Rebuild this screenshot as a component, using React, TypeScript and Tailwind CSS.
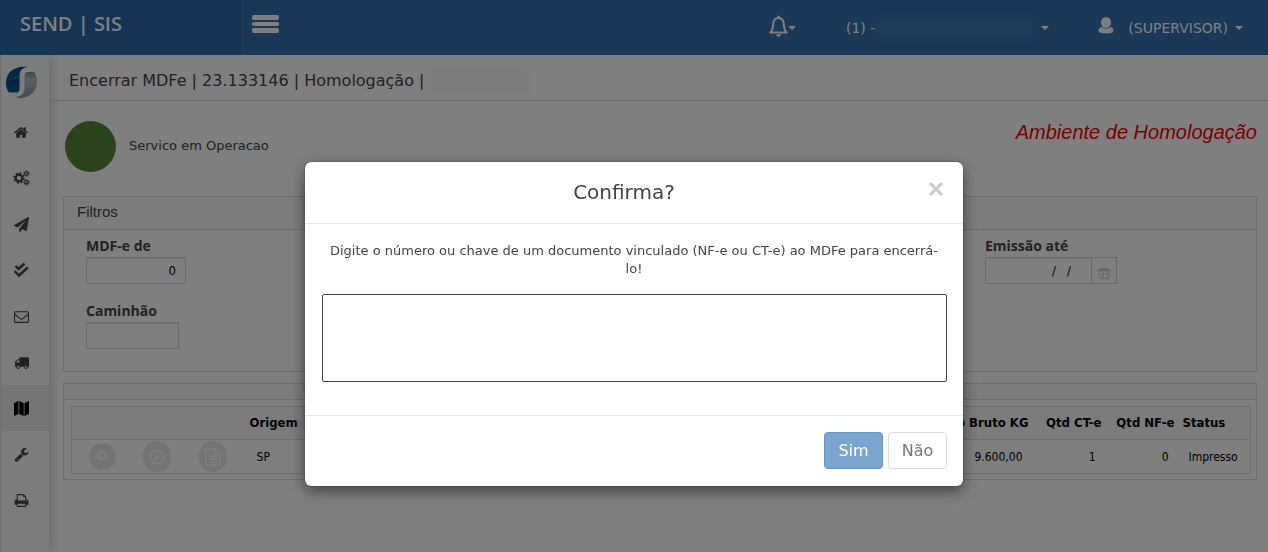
import { useState } from "react";
import type { ReactNode } from "react";
import { FaSearch } from "react-icons/fa";

interface MenuItem {
  nome: string;
  icone: ReactNode;
}

function Icone({ d, className = "size-[15px]" }: { d: string; className?: string }) {
  return (
    <svg viewBox="0 0 1792 1792" fill="currentColor" className={className} aria-hidden="true">
      <path d={d} />
    </svg>
  );
}

const HOME =
  "M1408 992v480q0 26-19 45t-45 19h-384v-384h-256v384h-384q-26 0-45-19t-19-45v-480q0-1 .5-3t.5-3l575-474 575 474q1 2 1 6zm223-69l-62 74q-8 9-21 11h-3q-13 0-21-7l-692-577-692 577q-12 8-24 7-13-2-21-11l-62-74q-8-10-7-23.5t11-21.5l719-599q32-26 76-26t76 26l244 204v-195q0-14 9-23t23-9h192q14 0 23 9t9 23v408l219 182q10 8 11 21.5t-7 23.5z";
const AVIAO =
  "M1764 11q33 24 27 64l-256 1536q-5 29-32 45-14 8-31 8-11 0-24-5l-453-185-242 295q-18 23-49 23-13 0-22-4-19-7-30.5-23.5t-11.5-36.5v-349l864-1059-1069 925-395-162q-37-14-40-55-2-40 32-59l1664-960q15-9 32-9 20 0 36 11z";
const ENVELOPE =
  "M1664 1504v-768q-32 36-69 66-268 206-426 338-51 43-83 67t-86.5 48.5-102.5 24.5h-2q-48 0-102.5-24.5t-86.5-48.5-83-67q-158-132-426-338-37-30-69-66v768q0 13 9.5 22.5t22.5 9.5h1472q13 0 22.5-9.5t9.5-22.5zm0-1051v-24.5l-.5-13-3-12.5-5.5-9-9-7.5-14-2.5h-1472q-13 0-22.5 9.5t-9.5 22.5q0 168 147 284 193 152 401 317 6 5 35 29.5t46 37.5 44.5 31.5 50.5 27.5 43 9h2q20 0 43-9t50.5-27.5 44.5-31.5 46-37.5 35-29.5q208-165 401-317 54-43 100.5-115.5t46.5-131.5zm128-37v1088q0 66-47 113t-113 47h-1472q-66 0-113-47t-47-113v-1088q0-66 47-113t113-47h1472q66 0 113 47t47 113z";
const CAMINHAO =
  "M640 1408q0-52-38-90t-90-38-90 38-38 90 38 90 90 38 90-38 38-90zm-384-512h384v-256h-158q-13 0-22 9l-195 195q-9 9-9 22v30zm1280 512q0-52-38-90t-90-38-90 38-38 90 38 90 90 38 90-38 38-90zm256-1088v1024q0 15-4 26.5t-13.5 18.5-16.5 11.5-23.5 6-22.5 2-25.5 0-22.5-.5q0 106-75 181t-181 75-181-75-75-181h-384q0 106-75 181t-181 75-181-75-75-181h-64q-3 0-22.5.5t-25.5 0-22.5-2-23.5-6-16.5-11.5-13.5-18.5-4-26.5q0-26 19-45t45-19v-320q0-8-.5-35t0-38 2.5-34.5 6.5-37 14-30.5 22.5-30l198-198q19-19 50.5-32t58.5-13h160v-192q0-26 19-45t45-19h1024q26 0 45 19t19 45z";
const MAPA = "M0 240L540 0V1540L0 1792zM630 0L1160 240V1792L630 1540zM1250 240L1792 0V1540L1250 1792z";
const CHAVE =
  "M448 1472q0-26-19-45t-45-19-45 19-19 45 19 45 45 19 45-19 19-45zm644-420l-682 682q-37 37-90 37-52 0-91-37l-106-108q-38-36-38-90 0-53 38-91l681-681q39 98 114.5 173.5t173.5 114.5zm634-435q0 39-23 106-47 134-164.5 217.5t-258.5 83.5q-185 0-316.5-131.5t-131.5-316.5 131.5-316.5 316.5-131.5q58 0 121.5 16.5t107.5 46.5q16 11 16 28t-16 28l-293 169v224l193 107q5-3 79-48.5t135.5-81 70.5-35.5q15 0 23.5 10t8.5 25z";
const IMPRESSORA =
  "M448 1536h896v-256h-896v256zm0-640h896v-384h-160q-40 0-68-28t-28-68v-160h-640v640zm1152 64q0-26-19-45t-45-19-45 19-19 45 19 45 45 19 45-19 19-45zm128 0v416q0 13-9.5 22.5t-22.5 9.5h-224v160q0 40-28 68t-68 28h-960q-40 0-68-28t-28-68v-160h-224q-13 0-22.5-9.5t-9.5-22.5v-416q0-79 56.5-135.5t135.5-56.5h64v-544q0-40 28-68t68-28h672q40 0 88 20t76 48l152 152q28 28 48 76t20 88v256h64q79 0 135.5 56.5t56.5 135.5z";

function Engrenagens() {
  return (
    <svg viewBox="0 0 17 16" fill="none" stroke="currentColor" className="h-4 w-[17px] shrink-0" aria-hidden="true">
      <circle cx="6" cy="8" r="3.3" strokeWidth="2.2" />
      <circle cx="6" cy="8" r="5" strokeWidth="1.6" strokeDasharray="1.96 1.96" />
      <circle cx="13.500" cy="3.500" r="1.700" strokeWidth="1.300" />
      <circle cx="13.500" cy="3.500" r="2.700" strokeWidth="1" strokeDasharray="1.400 1.430" />
      <circle cx="13.500" cy="12.300" r="1.700" strokeWidth="1.300" />
      <circle cx="13.500" cy="12.300" r="2.700" strokeWidth="1" strokeDasharray="1.400 1.430" />
    </svg>
  );
}

function Conferido() {
  return (
    <svg viewBox="0 0 16 16" fill="none" stroke="currentColor" strokeWidth="2.400" className="size-4" aria-hidden="true">
      <path d="M2.500 4L5.500 7L11.500 1.500" />
      <path d="M1.500 9L6 13.500L14.800 5.500" />
    </svg>
  );
}

const MENU: MenuItem[] = [
  { nome: "Home", icone: <Icone d={HOME} /> },
  { nome: "Configurações", icone: <Engrenagens /> },
  { nome: "Envios", icone: <Icone d={AVIAO} /> },
  { nome: "Conferência", icone: <Conferido /> },
  { nome: "Mensagens", icone: <Icone d={ENVELOPE} /> },
  { nome: "Transporte", icone: <Icone d={CAMINHAO} /> },
  { nome: "MDFe", icone: <Icone d={MAPA} /> },
  { nome: "Ferramentas", icone: <Icone d={CHAVE} /> },
  { nome: "Impressão", icone: <Icone d={IMPRESSORA} /> },
];

const ATIVO = "MDFe";

function Seta() {
  return (
    <svg viewBox="0 0 8 4" fill="currentColor" className="h-1 w-2" aria-hidden="true">
      <path d="M0 0H8L4 4Z" />
    </svg>
  );
}

function Logo() {
  return (
    <svg viewBox="0 0 31 32" className="h-8 w-[31px]" aria-hidden="true">
      <defs>
        <linearGradient id="azul" x1="0" y1="0" x2="0" y2="1">
          <stop offset="0" stopColor="#00457f" />
          <stop offset="0.4" stopColor="#0d548f" />
          <stop offset="0.5" stopColor="#003d78" />
          <stop offset="1" stopColor="#005a96" />
        </linearGradient>
        <linearGradient id="cinza" x1="0" y1="0" x2="0" y2="1">
          <stop offset="0" stopColor="#7f8c94" />
          <stop offset="0.3" stopColor="#b3c0c6" />
          <stop offset="1" stopColor="#8a989f" />
        </linearGradient>
      </defs>
      <path d="M21 1C10-1 0 6 0 16c0 5 1 8 3 10.500h7c3 0 3.500-2 3.500-5V10c0-5 2-8 7.500-9z" fill="url(#azul)" />
      <path d="M.5 14c4-2 8-3 13-3.500v2c-4 0-9 1-13.500 4z" fill="#7fa3c4" opacity="0.3" />
      <path d="M22 6h6c2 3 3 6 3 10 0 10-8 16-17 16-2 0-3-.5-4-1 6-1 8.500-4 8.500-9V10c0-2 1-4 3.500-4z" fill="url(#cinza)" />
      <path d="M12 29c4-1.500 5-4 5-8V10c0-4 2-6 5-7 3 0 5 1 6 3" fill="none" stroke="white" strokeWidth="2" />
    </svg>
  );
}

function Topo() {
  return (
    <header className="relative z-10 flex h-[55px] bg-[#3472b2] font-['DejaVu_Sans',Verdana,sans-serif] text-sm text-white">
      <div className="w-[241px] shrink-0 bg-[#2a68a6] px-5 pt-2 font-['Open_Sans',sans-serif] text-xl leading-8 font-semibold">
        SEND | SIS
      </div>
      <button type="button" aria-label="Menu" className="ml-[11px] flex h-12 w-[27px] flex-col justify-center gap-[2px]">
        <span className="h-[5px] w-full rounded-xs bg-white" />
        <span className="h-1 w-full rounded-xs bg-white" />
        <span className="h-[5px] w-full rounded-xs bg-white" />
      </button>
      <div className="ml-auto flex items-center pr-[25px]">
        <button type="button" aria-label="Notificações" className="mr-[50px] flex items-center">
          <svg viewBox="0 0 19 22" className="mb-1 h-[22px] w-[19px]" aria-hidden="true">
            <path d="M1.300 17.500C4 15 4 12 4.200 9C4.500 5 6.500 3 9.500 3s5 2 5.300 6c.2 3 .2 6 2.900 8.500z" fill="none" stroke="white" strokeWidth="2" strokeLinejoin="round" />
            <path d="M8 3a1.500 2.500 0 0 1 3 0zM7 19.300h5q-.5 2.500-2.500 2.500T7 19.300z" fill="white" />
          </svg>
          <Seta />
        </button>
        <button type="button" className="mr-[49px] flex items-center">
          (1) -
          <span className="mr-1 h-6 w-[162px] rounded-sm bg-[#3d78b3] blur-[2px]" />
          <Seta />
        </button>
        <button type="button" className="flex items-center">
          <svg viewBox="0 0 16 17" fill="white" className="mr-[14px] mb-1 h-[17px] w-4" aria-hidden="true">
            <ellipse cx="8" cy="5.500" rx="5" ry="5.500" />
            <path d="M3.500 10q4.500 3.500 9 0q3 1 3 3.500q0 3-7.500 3t-7.500-3q0-2.500 3-3.500z" />
          </svg>
          <span className="mr-[7px]">(SUPERVISOR)</span>
          <Seta />
        </button>
      </div>
    </header>
  );
}

function Lateral() {
  return (
    <nav className="w-[49px] shrink-0 border-l border-[#dcdfe4] bg-[#f5f8fd] text-[#444] shadow-[3px_0_10px_rgba(0,0,0,0.18)]">
      <div className="flex h-[54px] items-center pl-[5px]">
        <Logo />
      </div>
      {MENU.map((item) => (
        <a
          key={item.nome}
          href="#"
          aria-label={item.nome}
          className={
            item.nome === ATIVO
              ? "flex h-[46px] items-center bg-[#e9ebee] pl-3 text-black"
              : "flex h-[46px] items-center pl-3"
          }
        >
          <span className="flex w-4 justify-center">{item.icone}</span>
        </a>
      ))}
    </nav>
  );
}

const LABEL = "block font-['Open_Sans',sans-serif] text-sm leading-[22px] font-bold text-[#444]";
const CAMPO =
  "h-[27px] border border-[#d5d5d5] bg-white px-[9px] text-right font-['DejaVu_Sans_Condensed',sans-serif] text-[13px] text-black shadow-[inset_0_1px_1px_rgba(0,0,0,0.08)]";

function Filtros() {
  const [mdfe, setMdfe] = useState("0");
  const [caminhao, setCaminhao] = useState("");
  const [emissao, setEmissao] = useState("/   /");

  return (
    <section className="border border-[#dcdcdc]">
      <h2 className="border-b border-[#dcdcdc] bg-[#f8f8f8] px-[13px] pb-[2px] font-['Liberation_Sans',Arial,sans-serif] text-[15px] leading-[30px] text-[#444]">
        Filtros
      </h2>
      <div className="flex h-[141px] pt-[5px] pl-[22px]">
        <div className="flex flex-1 flex-col items-start gap-4">
          <div>
            <label htmlFor="mdfe" className={LABEL}>MDF-e de</label>
            <input id="mdfe" className={`${CAMPO} w-[100px]`} value={mdfe} onChange={(e) => setMdfe(e.target.value)} />
          </div>
          <div>
            <label htmlFor="caminhao" className={LABEL}>Caminhão</label>
            <input id="caminhao" className={`${CAMPO} w-[93px]`} value={caminhao} onChange={(e) => setCaminhao(e.target.value)} />
          </div>
        </div>
        <div className="w-[271px]">
          <label htmlFor="emissao" className={LABEL}>Emissão até</label>
          <div className="flex">
            <input
              id="emissao"
              className={`${CAMPO} w-[107px] pr-5 whitespace-pre`}
              value={emissao}
              onChange={(e) => setEmissao(e.target.value)}
            />
            <button type="button" aria-label="Calendário" className="-ml-px flex h-[27px] w-[26px] items-center justify-center border border-[#d0d0d0] pt-1">
              <svg viewBox="0 0 12 12" className="size-3 text-[#ccc]" fill="none" stroke="currentColor" aria-hidden="true">
                <rect x="1" y="1.500" width="10" height="10" rx="1" />
                <path d="M1 3h10" strokeWidth="2.500" />
                <path d="M3 0v2M9 0v2" stroke="white" />
                <path d="M3 6h2.500v4H3M3.500 8h2M7 6.500h1.500V10" />
              </svg>
            </button>
          </div>
        </div>
      </div>
    </section>
  );
}

const ACAO = "inline-flex items-center justify-center rounded-full bg-[#e6e6e6] text-[#fbfbfb] align-middle";

function Tabela() {
  return (
    <section className="mt-[11px] border border-[#dcdcdc]">
      <div className="h-4 border-b border-[#dcdcdc] bg-[#f8f8f8]" />
      <div className="pt-[6px] pr-[5px] pb-[5px] pl-[7px]">
        <table className="w-full table-fixed border border-[#dcdcdc] font-['DejaVu_Sans_Condensed',Tahoma,sans-serif] text-xs text-black">
          <colgroup>
            <col className="w-[62px]" />
            <col className="w-[46px]" />
            <col className="w-[66px]" />
            <col className="w-[75px]" />
            <col />
            <col className="w-[110px]" />
            <col className="w-[73px]" />
            <col className="w-[73px]" />
            <col className="w-[72px]" />
          </colgroup>
          <thead>
            <tr className="h-[33px] border-b border-[#dcdcdc] bg-[#f8f8f8] text-[13px] whitespace-nowrap">
              <th colSpan={3} />
              <th className="pl-1 text-left">Origem</th>
              <th />
              <th className="pr-1 text-right">Peso Bruto KG</th>
              <th className="pr-1 text-right">Qtd CT-e</th>
              <th className="pr-1 text-right">Qtd NF-e</th>
              <th className="pl-1 text-left">Status</th>
            </tr>
          </thead>
          <tbody>
            <tr className="h-[34px]">
              <td className="text-center">
                <button type="button" aria-label="Consultar" className={`${ACAO} size-[27px]`}><FaSearch className="size-[11px]" /></button>
              </td>
              <td className="text-center">
                <button type="button" aria-label="Histórico" className={`${ACAO} h-[31px] w-7`}>
                  <svg viewBox="0 0 16 16" fill="none" stroke="currentColor" strokeWidth="2" className="size-4" aria-hidden="true">
                    <circle cx="8" cy="8" r="6.500" />
                    <path d="M8.500 4v5H5" />
                  </svg>
                </button>
              </td>
              <td className="text-center">
                <button type="button" aria-label="Documento" className={`${ACAO} h-[31px] w-7`}>
                  <svg viewBox="0 0 16 18" fill="none" stroke="currentColor" strokeWidth="1.500" className="h-[18px] w-4" aria-hidden="true">
                    <path d="M1 1h9l5 5v11H1zM10 1v5h5M4 8h8M4 11h8M4 14h8" />
                  </svg>
                </button>
              </td>
              <td className="pl-[11px]">SP</td>
              <td />
              <td className="pr-[10px] text-right">9.600,00</td>
              <td className="pr-[10px] text-right">1</td>
              <td className="pr-[10px] text-right">0</td>
              <td className="pl-[10px]">Impresso</td>
            </tr>
          </tbody>
        </table>
      </div>
    </section>
  );
}

function Confirma({ onClose }: { onClose: () => void }) {
  const [documento, setDocumento] = useState("");

  return (
    <div className="fixed inset-0 z-20 flex items-start justify-center bg-black/50 pt-[162px]">
      <div
        role="dialog"
        aria-modal="true"
        aria-labelledby="titulo"
        className="w-full max-w-[658px] rounded-md bg-white font-['DejaVu_Sans',Verdana,sans-serif] text-[#444] shadow-[0_5px_15px_rgba(0,0,0,0.5),0_0_1px_#000]"
      >
        <div className="flex items-start border-b border-[#e5e5e5] px-[17px] py-4">
          <h4 id="titulo" className="flex-1 text-center text-xl leading-[29px]">Confirma?</h4>
          <button type="button" aria-label="Fechar" onClick={onClose} className="flex h-[22px] w-5 items-center justify-center text-[#ccc]">
            <svg viewBox="0 0 14 14" className="size-[14px]" stroke="currentColor" strokeWidth="3" aria-hidden="true">
              <path d="M1 1L13 13M13 1L1 13" />
            </svg>
          </button>
        </div>
        <div className="px-4 pt-[18px] pb-[33px] text-center">
          <label htmlFor="documento" className="block text-[13px] leading-[18px]">
            Digite o número ou chave de um documento vinculado (NF-e ou CT-e) ao MDFe para encerrá-
            <br />
            lo!
          </label>
          <textarea
            id="documento"
            value={documento}
            onChange={(e) => setDocumento(e.target.value)}
            className="mt-4 ml-px block h-[88px] w-[calc(100%-1px)] resize-none rounded-xs border border-[#444] p-1 text-[13px]"
          />
        </div>
        <div className="flex justify-end gap-[5px] border-t border-[#e5e5e5] p-4 pb-[17px] text-base">
          <button type="button" onClick={onClose} className="h-[37px] w-[59px] rounded border border-[#6595c3] bg-[#7aa5ce] text-white">
            Sim
          </button>
          <button type="button" onClick={onClose} className="h-[37px] w-[59px] rounded border border-[#ddd] bg-white text-[#777]">
            Não
          </button>
        </div>
      </div>
    </div>
  );
}

export default function App() {
  const [aberto, setAberto] = useState(true);

  return (
    <div className="flex min-h-screen flex-col bg-white">
      <Topo />
      <div className="flex flex-1">
        <Lateral />
        <main className="min-w-0 flex-1 font-['DejaVu_Sans',Verdana,sans-serif] text-[#444]">
          <div className="flex h-[46px] items-center border-b border-[#d4d4d4] pt-[7px] pl-5">
            <h1 className="text-base">Encerrar MDFe | 23.133146 | Homologação |</h1>
            <span className="ml-1 h-8 w-[100px] bg-[#f9f9f9] blur-[2px]" />
          </div>
          <div className="pr-[11px] pl-[14px]">
            <div className="flex h-[95px] items-start pt-5 pl-[2px]">
              <span className="size-[51px] rounded-full bg-[#568639]" />
              <span className="ml-[13px] text-[13px] leading-[50px]">Servico em Operacao</span>
              <span className="ml-auto font-['Liberation_Sans',Arial,sans-serif] text-xl leading-[22px] text-[#f00000] italic">
                Ambiente de Homologação
              </span>
            </div>
            <Filtros />
            <Tabela />
          </div>
        </main>
      </div>
      {aberto && <Confirma onClose={() => setAberto(false)} />}
    </div>
  );
}
